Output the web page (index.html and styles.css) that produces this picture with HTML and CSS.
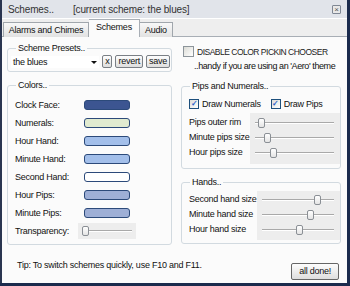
FILE: index.html
```html
<!DOCTYPE html>
<html lang="en">
<head>
    <meta charset="UTF-8">
    <title>Schemes..</title>
    <link rel="stylesheet" href="styles.css">
</head>
<body>
    <div class="window">
        <!-- Title bar -->
        <div class="titlebar">
            <span class="title">Schemes..</span>
            <span class="current">[current scheme: the blues]</span>
            <span class="close">&times;</span>
        </div>

        <!-- Tabs -->
        <div class="tabs">
            <div class="tab alarms">Alarms and Chimes</div>
            <div class="tab active">Schemes</div>
            <div class="tab audio">Audio</div>
        </div>

        <div class="page">
            <div class="top-row">
                <fieldset class="group presets">
                    <legend>Scheme Presets..</legend>
                    <div class="preset-row">
                        <div class="select">the blues<span class="arrow"></span></div>
                        <span class="btn">x</span>
                        <span class="btn">revert</span>
                        <span class="btn">save</span>
                    </div>
                </fieldset>
                <div class="aero">
                    <div class="check big"><span class="box"></span>DISABLE COLOR PICKIN CHOOSER</div>
                    <div class="hint">..handy if you are using an 'Aero' theme</div>
                </div>
            </div>

            <div class="main-row">
                <!-- Colors -->
                <fieldset class="group colors">
                    <legend>Colors..</legend>
                    <div class="color-row"><span class="label">Clock Face:</span><span class="swatch sw-face"></span></div>
                    <div class="color-row"><span class="label">Numerals:</span><span class="swatch sw-numerals"></span></div>
                    <div class="color-row"><span class="label">Hour Hand:</span><span class="swatch sw-hand"></span></div>
                    <div class="color-row"><span class="label">Minute Hand:</span><span class="swatch sw-hand"></span></div>
                    <div class="color-row"><span class="label">Second Hand:</span><span class="swatch sw-second"></span></div>
                    <div class="color-row"><span class="label">Hour Pips:</span><span class="swatch sw-pips"></span></div>
                    <div class="color-row"><span class="label">Minute Pips:</span><span class="swatch sw-pips"></span></div>
                    <div class="color-row"><span class="label">Transparency:</span>
                        <div class="slider small"><span class="track"></span><span class="thumb" style="left: 4px"></span></div>
                    </div>
                </fieldset>

                <div class="right-col">
                    <!-- Pips and numerals -->
                    <fieldset class="group pips">
                        <legend>Pips and Numerals..</legend>
                        <div class="checks">
                            <div class="check"><span class="box checked">&#10003;</span>Draw Numerals</div>
                            <div class="check"><span class="box checked">&#10003;</span>Draw Pips</div>
                        </div>
                        <div class="slider-block">
                            <div class="labels">
                                <div>Pips outer rim</div>
                                <div>Minute pips size</div>
                                <div>Hour pips size</div>
                            </div>
                            <div class="sliders">
                                <div class="slider"><span class="track"></span><span class="thumb" style="left: 8px"></span></div>
                                <div class="slider"><span class="track"></span><span class="thumb" style="left: 14px"></span></div>
                                <div class="slider"><span class="track"></span><span class="thumb" style="left: 20px"></span></div>
                            </div>
                        </div>
                    </fieldset>

                    <!-- Hands -->
                    <fieldset class="group hands">
                        <legend>Hands..</legend>
                        <div class="slider-block">
                            <div class="labels">
                                <div>Second hand size</div>
                                <div>Minute hand size</div>
                                <div>Hour hand size</div>
                            </div>
                            <div class="sliders">
                                <div class="slider"><span class="track"></span><span class="thumb" style="left: 57px"></span></div>
                                <div class="slider"><span class="track"></span><span class="thumb" style="left: 50px"></span></div>
                                <div class="slider"><span class="track"></span><span class="thumb" style="left: 39px"></span></div>
                            </div>
                        </div>
                    </fieldset>
                </div>
            </div>

            <div class="footer">
                <span class="tip">Tip: To switch schemes quickly, use F10 and F11.</span>
                <span class="btn done">all done!</span>
            </div>
        </div>
    </div>
</body>
</html>
```

FILE: styles.css
```css
/* Page = desktop behind the window */
body {
    margin: 0;
    background: #1b2b4d;
    font-family: "Liberation Sans", Arial, sans-serif;
    font-size: 9px;
    letter-spacing: -0.25px;
    color: #111;
}

.window {
    width: 345px;
    height: 283px;
    border-left: 2px solid #2a3550;
    background: #fbfbfb;
    display: flex;
    flex-direction: column;
}

/* Title bar */
.titlebar {
    height: 18px;
    background: #e1e4ea;
    border-bottom: 1px solid #fff;
    display: flex;
    align-items: center;
    padding: 0 6px 0 6px;
    font-size: 10px;
    letter-spacing: -0.15px;
    color: #333;
}

.current {
    margin-left: 19px;
    flex: 1;
}

.close {
    width: 7px;
    height: 7px;
    border: 1px solid #7f8794;
    border-radius: 1px;
    background: #e8e8e8;
    font-size: 8px;
    line-height: 7px;
    text-align: center;
    color: #555;
}

/* Tabs */
.tabs {
    height: 17px;
    background: #eeeeee;
    border-bottom: 1px solid #a8aeb5;
    display: flex;
    align-items: flex-end;
    padding-left: 1px;
}

.tab {
    height: 14px;
    line-height: 14px;
    text-align: center;
    border: 1px solid #a0a6ac;
    border-bottom: none;
    background: linear-gradient(#f8f8f8, #e2e2e2);
    margin-bottom: -1px;
}

.tab.alarms { width: 84px; }
.tab.audio { width: 32px; border-left: none; }

.tab.active {
    width: 50px;
    height: 17px;
    line-height: 15px;
    background: #fbfbfb;
    border-color: #a8aeb5;
    border-left: none;
}

.page {
    flex: 1;
    padding: 6px 6px 0 5px;
    display: flex;
    flex-direction: column;
}

/* Group boxes */
.group {
    margin: 0;
    min-width: 0;
    border: 1px solid #d2dae0;
    border-radius: 3px;
    padding: 0 6px;
}

.group legend {
    padding: 0 2px;
    margin-left: 2px;
}

.top-row {
    display: flex;
    gap: 9px;
}

.presets {
    width: 156px;
    height: 27px;
    padding-right: 1px;
}

.preset-row {
    display: flex;
    align-items: center;
    gap: 3px;
    margin-top: 2px;
    margin-left: -3px;
}

.select {
    width: 88px;
    height: 12px;
    line-height: 12px;
    padding-left: 2px;
    background: #fff;
    position: relative;
}

.arrow {
    position: absolute;
    right: 2px;
    top: 5px;
    border: 3px solid transparent;
    border-top: 3px solid #111;
    border-bottom: none;
}

.btn {
    display: inline-block;
    height: 11px;
    line-height: 11px;
    padding: 0 2px;
    border: 1px solid #7a7f85;
    border-radius: 2px;
    background: linear-gradient(#fdfdfd, #dedede);
}

/* Aero checkbox */
.aero {
    padding: 3px 0 0 2px;
}

.check {
    display: flex;
    align-items: center;
    white-space: nowrap;
}

.check .box {
    width: 8px;
    height: 8px;
    border: 1px solid #1d4f7c;
    background: linear-gradient(135deg, #dcdcd6, #fff);
    margin-right: 3px;
    font-size: 8px;
    line-height: 8px;
    text-align: center;
    color: #2a5fc8;
    font-weight: bold;
}

.check.big {
    font-size: 8.5px;
    letter-spacing: -0.5px;
    color: #222;
}

.check.big .box {
    width: 9px;
    height: 9px;
    border-color: #8c949a;
    margin-right: 3px;
}

.hint {
    margin: 4px 0 0 11px;
    letter-spacing: -0.42px;
    white-space: nowrap;
}

/* Main two columns */
.main-row {
    display: flex;
    gap: 9px;
    margin-top: 8px;
}

.colors {
    width: 151px;
    height: 157px;
    padding-top: 6px;
}

.color-row {
    display: flex;
    align-items: center;
    height: 18px;
}

.color-row .label {
    width: 69px;
    padding-left: 1px;
}

.swatch {
    width: 44px;
    height: 8px;
    border: 1px solid #2c4a7a;
    border-radius: 3px;
}

.sw-face { background: #3c5591; }
.sw-numerals { background: #e1ebd0; }
.sw-hand { background: #a3bfea; }
.sw-second { background: #fff; }
.sw-pips { background: #9eafd6; }

.right-col {
    display: flex;
    flex-direction: column;
    gap: 8px;
    margin-top: 1px;
}

.pips {
    width: 152px;
    height: 86px;
    padding-right: 0;
}

.hands {
    width: 152px;
    height: 65px;
    padding-right: 0;
}

.checks {
    display: flex;
    gap: 10px;
    padding: 8px 0 4px 1px;
}

.slider-block {
    display: flex;
}

.labels {
    flex: 1;
    padding-left: 1px;
    white-space: nowrap;
}

.labels div,
.sliders .slider {
    height: 15px;
    line-height: 15px;
}

.pips .labels {
    padding-top: 2px;
}

.pips .sliders {
    width: 90px;
    padding: 2px 0 4px;
    background: #ededed;
}

.hands .slider-block {
    margin-top: 4px;
}

.hands .sliders {
    width: 85px;
    padding: 1px 0 3px;
    background: #ededed;
}

.hands .labels {
    padding-top: 1px;
}

/* Sliders */
.slider {
    position: relative;
}

.slider .track {
    position: absolute;
    left: 5px;
    right: 6px;
    top: 7px;
    height: 1px;
    background: #a9a9a9;
    border-bottom: 1px solid #fff;
}

.slider .thumb {
    position: absolute;
    top: 3px;
    width: 5px;
    height: 8px;
    border: 1px solid #8a8f95;
    border-radius: 2px;
    background: linear-gradient(#fff, #e4e4e4);
}

.slider.small {
    width: 58px;
    height: 16px;
    background: #ededed;
    margin-left: -6px;
}

.slider.small .track {
    left: 4px;
    right: 4px;
}

/* Footer */
.footer {
    flex: 1;
    display: flex;
    align-items: flex-end;
    justify-content: space-between;
    padding: 0 2px 3px 10px;
}

.tip {
    margin-bottom: 10px;
}

.btn.done {
    height: 15px;
    line-height: 15px;
    padding: 0 7px;
    border-color: #666;
    border-radius: 2px;
}
```
